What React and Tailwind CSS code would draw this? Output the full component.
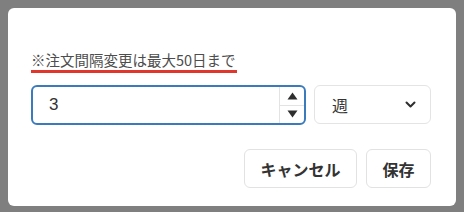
import { useState } from "react";

export default function App() {
    const [interval, setInterval] = useState("3");
    const [unit, setUnit] = useState("週");

    // 数値の増減
    const step = (d) => {
        const n = Math.max(1, Math.min(50, (parseInt(interval, 10) || 0) + d));
        setInterval(String(n));
    };

    return (
        <div className="w-[464px] h-[212px] bg-[#7f7f7f] p-2 font-['Noto_Sans_CJK_JP',sans-serif]">
            <div className="w-[448px] h-[198px] bg-white rounded-md pl-[23px] pr-[25px] pt-[41px]">
                <div className="flex">
                    <span className="inline-block text-[14.5px] leading-[21px] text-[#4d4d4d] border-b-[3px] border-[#e0362c] pr-[1px]">
                        ※注文間隔変更は最大50日まで
                    </span>
                </div>

                <div className="flex gap-2 mt-[12px]">
                    <div className="w-[275px] h-[40px] flex border-2 border-[#3b7bbb] rounded-md overflow-hidden">
                        <input
                            type="text"
                            value={interval}
                            onChange={(e) => setInterval(e.target.value)}
                            className="flex-1 min-w-0 pl-4 text-[17px] text-[#333] outline-none font-['Liberation_Sans',sans-serif]"
                        />
                        <div className="w-[25px] flex flex-col border-l border-[#e3e3e3]">
                            <button onClick={() => step(1)} className="flex-1 flex items-center justify-center border-b border-[#e3e3e3]">
                                <svg width="11" height="8" viewBox="0 0 11 8">
                                    <path d="M5.5 0.5 L10.5 7.5 L0.5 7.5 Z" fill="#2e2e2e" />
                                </svg>
                            </button>
                            <button onClick={() => step(-1)} className="flex-1 flex items-center justify-center">
                                <svg width="11" height="8" viewBox="0 0 11 8">
                                    <path d="M0.5 0.5 L10.5 0.5 L5.5 7.5 Z" fill="#2e2e2e" />
                                </svg>
                            </button>
                        </div>
                    </div>

                    <button
                        onClick={() => setUnit(unit === "週" ? "日" : "週")}
                        className="w-[117px] h-[39px] flex items-center justify-between pl-[17px] pr-[14px] border border-[#e4e4e4] rounded-md text-[16px] text-[#333]"
                    >
                        <span>{unit}</span>
                        <svg width="11" height="7" viewBox="0 0 11 7">
                            <path d="M1.5 1.5 L5.5 5.5 L9.5 1.5" fill="none" stroke="#2e2e2e" strokeWidth="2" strokeLinecap="round" strokeLinejoin="round" />
                        </svg>
                    </button>
                </div>

                <div className="flex justify-end gap-[9px] mt-[24px]">
                    <button className="w-[113px] h-[39px] border border-[#e2e2e2] rounded-md text-[16px] font-bold text-[#333]">
                        キャンセル
                    </button>
                    <button className="w-[65px] h-[39px] border border-[#e2e2e2] rounded-md text-[16px] font-bold text-[#333]">
                        保存
                    </button>
                </div>
            </div>
        </div>
    );
}
